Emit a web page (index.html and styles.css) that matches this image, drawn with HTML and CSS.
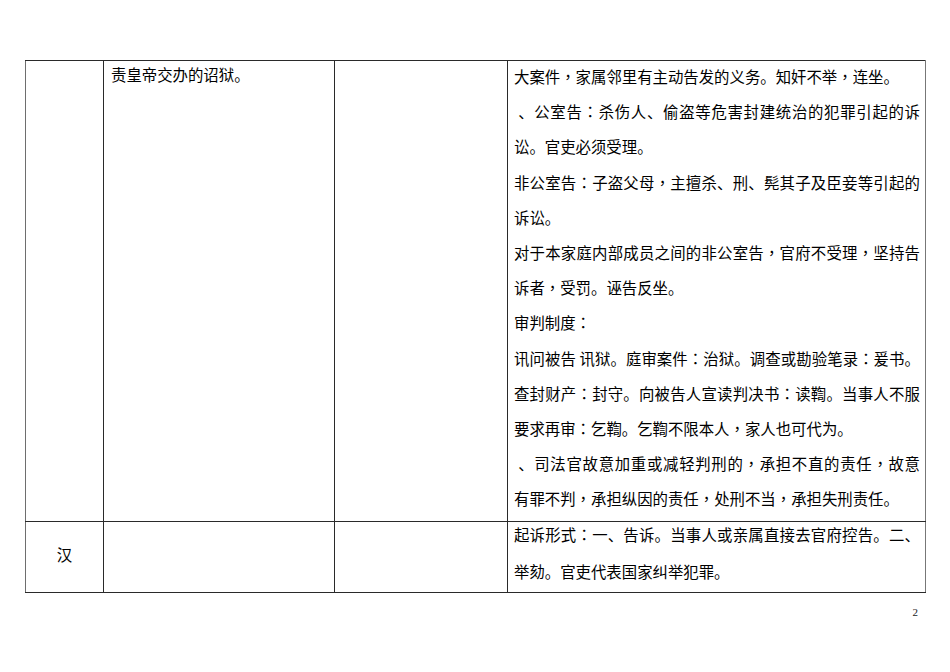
FILE: index.html
```html
<!DOCTYPE html>
<html lang="zh-CN">
<head>
<meta charset="utf-8">
<title>第2页</title>
<link rel="stylesheet" href="styles.css">
</head>
<body>
<div class="page">
  <table class="doc">
    <colgroup>
      <col class="w1">
      <col class="w2">
      <col class="w3">
      <col class="w4">
    </colgroup>
    <tr class="r1">
      <td class="c1"></td>
      <td class="c2"><div class="t2">责皇帝交办的诏狱。</div></td>
      <td class="c3"></td>
      <td class="c4">
        <div class="lines a">
          <p class="ln">大案件<span class="tc">，</span>家属邻里有主动告发的义务。知奸不举<span class="tc">，</span>连坐。</p>
          <p class="ln j">&nbsp;、公室告<span class="tc">：</span>杀伤人、偷盗等危害封建统治的犯罪引起的诉</p>
          <p class="ln">讼。官吏必须受理。</p>
          <p class="ln j">非公室告<span class="tc">：</span>子盗父母<span class="tc">，</span>主擅杀、刑、髡其子及臣妾等引起的</p>
          <p class="ln">诉讼。</p>
          <p class="ln j">对于本家庭内部成员之间的非公室告<span class="tc">，</span>官府不受理<span class="tc">，</span>坚持告</p>
          <p class="ln">诉者<span class="tc">，</span>受罚。诬告反坐。</p>
          <p class="ln">审判制度<span class="tc">：</span></p>
          <p class="ln j">讯问被告 讯狱。庭审案件<span class="tc">：</span>治狱。调查或勘验笔录<span class="tc">：</span>爰书。</p>
          <p class="ln j">查封财产<span class="tc">：</span>封守。向被告人宣读判决书<span class="tc">：</span>读鞫。当事人不服</p>
          <p class="ln">要求再审<span class="tc">：</span>乞鞫。乞鞫不限本人<span class="tc">，</span>家人也可代为。</p>
          <p class="ln j">&nbsp;、司法官故意加重或减轻判刑的<span class="tc">，</span>承担不直的责任<span class="tc">，</span>故意</p>
          <p class="ln">有罪不判<span class="tc">，</span>承担纵因的责任<span class="tc">，</span>处刑不当<span class="tc">，</span>承担失刑责任。</p>
        </div>
      </td>
    </tr>
    <tr class="r2">
      <td class="c1 era"><span>汉</span></td>
      <td class="c2"></td>
      <td class="c3"></td>
      <td class="c4">
        <div class="lines b">
          <p class="ln j">起诉形式<span class="tc">：</span>一、告诉。当事人或亲属直接去官府控告。二、</p>
          <p class="ln">举劾。官吏代表国家纠举犯罪。</p>
        </div>
      </td>
    </tr>
  </table>
  <div class="pg">2</div>
</div>
</body>
</html>
```
FILE: styles.css
```css
html, body {
  margin: 0;
  padding: 0;
  background: #ffffff;
}

body {
  font-family: "Noto Sans CJK SC", "Noto Sans", sans-serif;
  color: #000000;
}

.page {
  width: 950px;
  height: 672px;
  overflow: hidden;
}

.doc {
  border-collapse: collapse;
  table-layout: fixed;
  width: 900px;
  margin: 60px 0 0 25px;
  font-size: 15.4px;
}

.w1 { width: 78px; }
.w2 { width: 231px; }
.w3 { width: 173px; }
.w4 { width: 418px; }

.doc td {
  border: 1px solid #2a2a2a;
  padding: 0;
  vertical-align: top;
}

.doc td.c1 { border-left-color: #6e6e6e; }
.doc td.c3 { border-left-color: #7a7a7a; }
.doc td.c4 { border-right-color: #777777; }

.r1 { height: 461px; }
.r2 { height: 71px; }

.t2 {
  margin-top: -4px;
  padding-left: 7px;
  line-height: 35px;
}

.lines {
  padding: 0 5px 0 6px;
}

.lines.a {
  margin-top: -2px;
  line-height: 35.2px;
}

.lines.b {
  margin-top: -6px;
  line-height: 36.5px;
}

.ln {
  margin: 0;
}

.j {
  text-align: justify;
  text-align-last: justify;
}

.tc {
  font-family: "Noto Sans CJK TC", "Noto Sans CJK SC", sans-serif;
  font-feature-settings: "locl" 0;
}

.doc td.era {
  vertical-align: middle;
  text-align: center;
  padding-bottom: 6px;
}

.pg {
  width: 918px;
  margin-top: 13px;
  text-align: right;
  font-family: "Liberation Serif", serif;
  font-size: 11px;
  line-height: 12px;
  color: #222222;
}
```
